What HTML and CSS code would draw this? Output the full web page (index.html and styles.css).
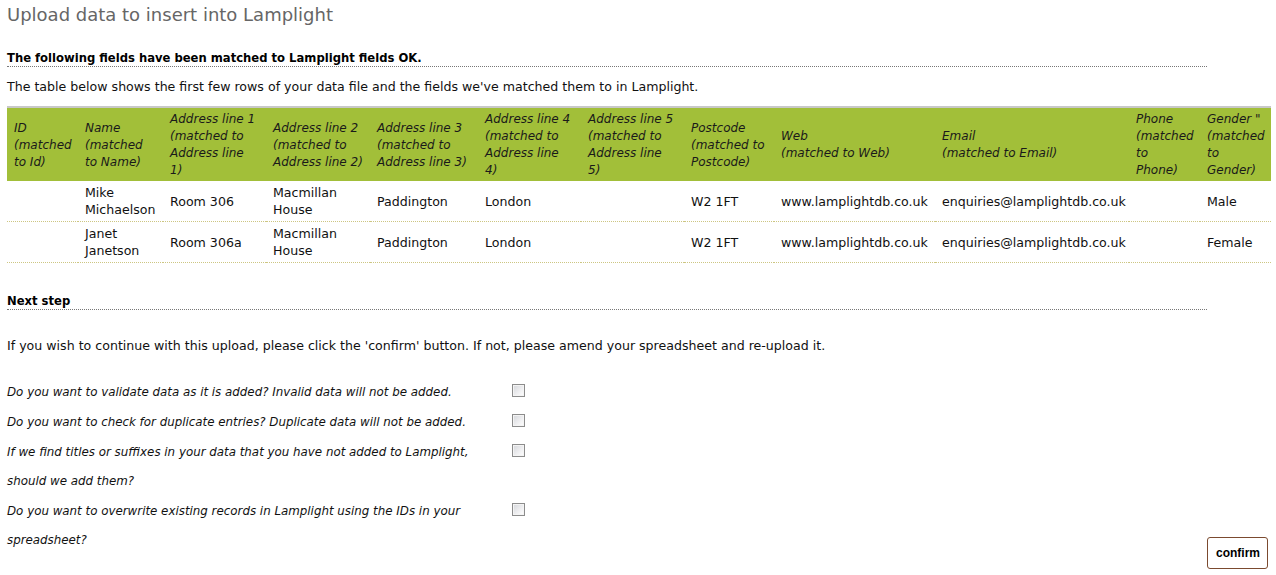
FILE: index.html
```html
<!DOCTYPE html>
<html lang="en">
<head>
<meta charset="utf-8">
<title>Upload data to insert into Lamplight</title>
<link rel="stylesheet" href="styles.css">
</head>
<body>
<div class="page">
  <h1 class="title">Upload data to insert into Lamplight</h1>

  <h2 class="section-heading">The following fields have been matched to Lamplight fields OK.</h2>
  <p class="intro">The table below shows the first few rows of your data file and the fields we've matched them to in Lamplight.</p>

  <table class="data-table">
    <colgroup>
      <col class="c-id"><col class="c-name"><col class="c-a1"><col class="c-a2"><col class="c-a3"><col class="c-a4"><col class="c-a5"><col class="c-post"><col class="c-web"><col class="c-email"><col class="c-phone"><col class="c-gender">
    </colgroup>
    <thead>
      <tr>
        <th>ID<br>(matched<br>to Id)</th>
        <th>Name<br>(matched<br>to Name)</th>
        <th>Address line 1<br>(matched to<br>Address line<br>1)</th>
        <th>Address line 2<br>(matched to<br>Address line 2)</th>
        <th>Address line 3<br>(matched to<br>Address line 3)</th>
        <th>Address line 4<br>(matched to<br>Address line<br>4)</th>
        <th>Address line 5<br>(matched to<br>Address line<br>5)</th>
        <th>Postcode<br>(matched to<br>Postcode)</th>
        <th>Web<br>(matched to Web)</th>
        <th>Email<br>(matched to Email)</th>
        <th>Phone<br>(matched<br>to<br>Phone)</th>
        <th>Gender "<br>(matched<br>to<br>Gender)</th>
      </tr>
    </thead>
    <tbody>
      <tr>
        <td></td><td>Mike Michaelson</td><td>Room 306</td><td>Macmillan House</td><td>Paddington</td><td>London</td><td></td><td>W2 1FT</td><td>www.lamplightdb.co.uk</td><td>enquiries@lamplightdb.co.uk</td><td></td><td>Male</td>
      </tr>
      <tr>
        <td></td><td>Janet Janetson</td><td>Room 306a</td><td>Macmillan House</td><td>Paddington</td><td>London</td><td></td><td>W2 1FT</td><td>www.lamplightdb.co.uk</td><td>enquiries@lamplightdb.co.uk</td><td></td><td>Female</td>
      </tr>
    </tbody>
  </table>

  <h2 class="section-heading next">Next step</h2>
  <p class="confirm-text">If you wish to continue with this upload, please click the 'confirm' button. If not, please amend your spreadsheet and re-upload it.</p>

  <form class="options">
    <div class="questions">
      <label class="question">
        <span class="q-text">Do you want to validate data as it is added? Invalid data will not be added.</span>
        <span class="q-box"><input type="checkbox"></span>
      </label>
      <label class="question">
        <span class="q-text">Do you want to check for duplicate entries? Duplicate data will not be added.</span>
        <span class="q-box"><input type="checkbox"></span>
      </label>
      <label class="question">
        <span class="q-text">If we find titles or suffixes in your data that you have not added to Lamplight, should we add them?</span>
        <span class="q-box"><input type="checkbox"></span>
      </label>
      <label class="question">
        <span class="q-text">Do you want to overwrite existing records in Lamplight using the IDs in your spreadsheet?</span>
        <span class="q-box"><input type="checkbox"></span>
      </label>
    </div>
    <div class="actions">
      <button type="button" class="confirm-btn">confirm</button>
    </div>
  </form>
</div>
</body>
</html>
```

FILE: styles.css
```css
html, body {
  margin: 0;
  padding: 0;
  background: #ffffff;
}

body {
  font-family: "DejaVu Sans", Verdana, sans-serif;
  font-size: 12.6px;
  color: #111111;
}

.page {
  padding: 0 7px;
}

.title {
  margin: 0;
  padding-top: 4px;
  font-size: 18px;
  line-height: 22px;
  font-weight: normal;
  color: #666666;
}

.section-heading {
  width: 1200px;
  margin: 24px 0 0;
  font-size: 11.6px;
  line-height: 16px;
  font-weight: bold;
  color: #000000;
  border-bottom: 1px dotted #777777;
}

.intro {
  margin: 12px 0 0;
  line-height: 16px;
}

.data-table {
  margin-top: 11px;
  width: 1264px;
  table-layout: fixed;
  border-collapse: collapse;
  border-top: 2px solid #c8c8c8;
}

.c-id { width: 71px; }
.c-name { width: 85px; }
.c-a1 { width: 103px; }
.c-a2 { width: 104px; }
.c-a3 { width: 108px; }
.c-a4 { width: 103px; }
.c-a5 { width: 103px; }
.c-post { width: 90px; }
.c-web { width: 161px; }
.c-email { width: 194px; }
.c-phone { width: 71px; }
.c-gender { width: 71px; }

.data-table th {
  background: #a2bf39;
  color: #1a1a1a;
  font-size: 12px;
  font-style: italic;
  font-weight: normal;
  text-align: left;
  vertical-align: middle;
  white-space: nowrap;
  line-height: 17px;
  padding: 3px 2px 2px 7px;
  height: 68px;
}

.data-table td {
  vertical-align: middle;
  line-height: 17px;
  padding: 3px 2px 3px 7px;
  height: 34px;
  border-bottom: 1px dotted #cdc682;
  color: #111111;
  white-space: normal;
}

.section-heading.next {
  margin-top: 30px;
}

.confirm-text {
  margin: 28px 0 0;
  line-height: 16px;
}

.options {
  margin-top: 23px;
  width: 1261px;
  display: grid;
  grid-template-columns: 1fr auto;
  align-items: end;
}

.questions {
  display: flex;
  flex-direction: column;
  padding-bottom: 14px;
}

.question {
  display: flex;
  align-items: flex-start;
  padding-top: 1px;
}

.q-text {
  width: 500px;
  font-size: 11.85px;
  font-style: italic;
  line-height: 29px;
  color: #111111;
}

.q-box {
  padding-left: 5px;
  padding-top: 6px;
  line-height: 0;
}

.q-box input {
  -webkit-appearance: none;
  appearance: none;
  margin: 0;
  width: 13px;
  height: 13px;
  border: 1px solid #8c8c8c;
  background: linear-gradient(135deg, #d4d6da 0%, #f0f0f2 60%, #ffffff 100%);
  box-shadow: inset 0 0 0 1px #f4f4f4;
  border-radius: 0;
}

.confirm-btn {
  font-family: "Liberation Sans", Arial, sans-serif;
  font-size: 12px;
  font-weight: bold;
  line-height: 14px;
  color: #000000;
  background: #ffffff;
  border: 1px solid #7b4a2f;
  border-radius: 3px;
  padding: 8px 8px;
  width: 61px;
  height: 32px;
}
```
